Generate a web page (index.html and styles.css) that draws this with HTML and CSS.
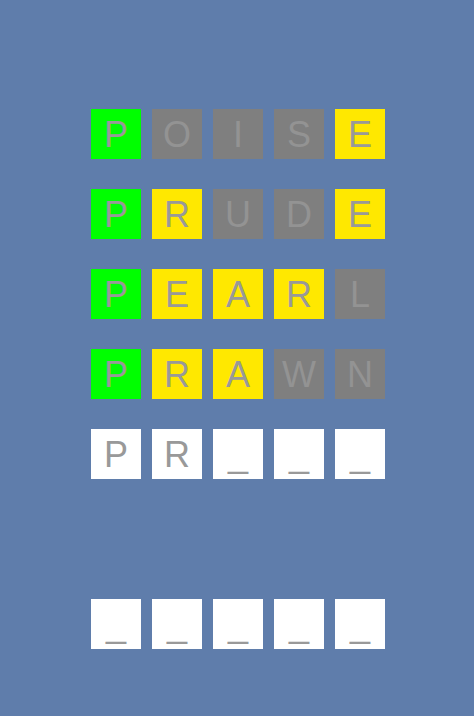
FILE: index.html
```html
<!DOCTYPE html>
<html>
<head>
<meta charset="utf-8">
<link rel="stylesheet" href="styles.css">
</head>
<body>
<main class="game">
  <section class="board">
    <div class="row">
      <div class="tile green">P</div>
      <div class="tile gray">O</div>
      <div class="tile gray">I</div>
      <div class="tile gray">S</div>
      <div class="tile yellow">E</div>
    </div>
    <div class="row">
      <div class="tile green">P</div>
      <div class="tile yellow">R</div>
      <div class="tile gray">U</div>
      <div class="tile gray">D</div>
      <div class="tile yellow">E</div>
    </div>
    <div class="row">
      <div class="tile green">P</div>
      <div class="tile yellow">E</div>
      <div class="tile yellow">A</div>
      <div class="tile yellow">R</div>
      <div class="tile gray">L</div>
    </div>
    <div class="row">
      <div class="tile green">P</div>
      <div class="tile yellow">R</div>
      <div class="tile yellow">A</div>
      <div class="tile gray">W</div>
      <div class="tile gray">N</div>
    </div>
    <div class="row">
      <div class="tile white">P</div>
      <div class="tile white">R</div>
      <div class="tile white">_</div>
      <div class="tile white">_</div>
      <div class="tile white">_</div>
    </div>
  </section>
  <section class="board entry">
    <div class="row">
      <div class="tile white">_</div>
      <div class="tile white">_</div>
      <div class="tile white">_</div>
      <div class="tile white">_</div>
      <div class="tile white">_</div>
    </div>
  </section>
</main>
</body>
</html>
```
FILE: styles.css
```css
html, body {
  margin: 0;
  padding: 0;
}
body {
  background: #5f7dab;
  width: 474px;
  height: 716px;
  overflow: hidden;
  font-family: "Liberation Sans", Arial, sans-serif;
}
.game {
  display: flex;
  flex-direction: column;
  padding-top: 109px;
  padding-left: 91px;
}
.board {
  display: flex;
  flex-direction: column;
  gap: 30px;
}
.board.entry {
  margin-top: 120px;
}
.row {
  display: flex;
  gap: 11px;
}
.tile {
  width: 50px;
  height: 50px;
  box-sizing: border-box;
  padding-top: 2px;
  font-size: 36px;
  line-height: 48px;
  text-align: center;
  color: #999999;
  overflow: hidden;
}
.green { background: #00ff00; color: #999999; }
.gray { background: #7f7f7f; color: #939393; }
.yellow { background: #ffe800; color: #999999; }
.white { background: #ffffff; color: #999999; }
```
